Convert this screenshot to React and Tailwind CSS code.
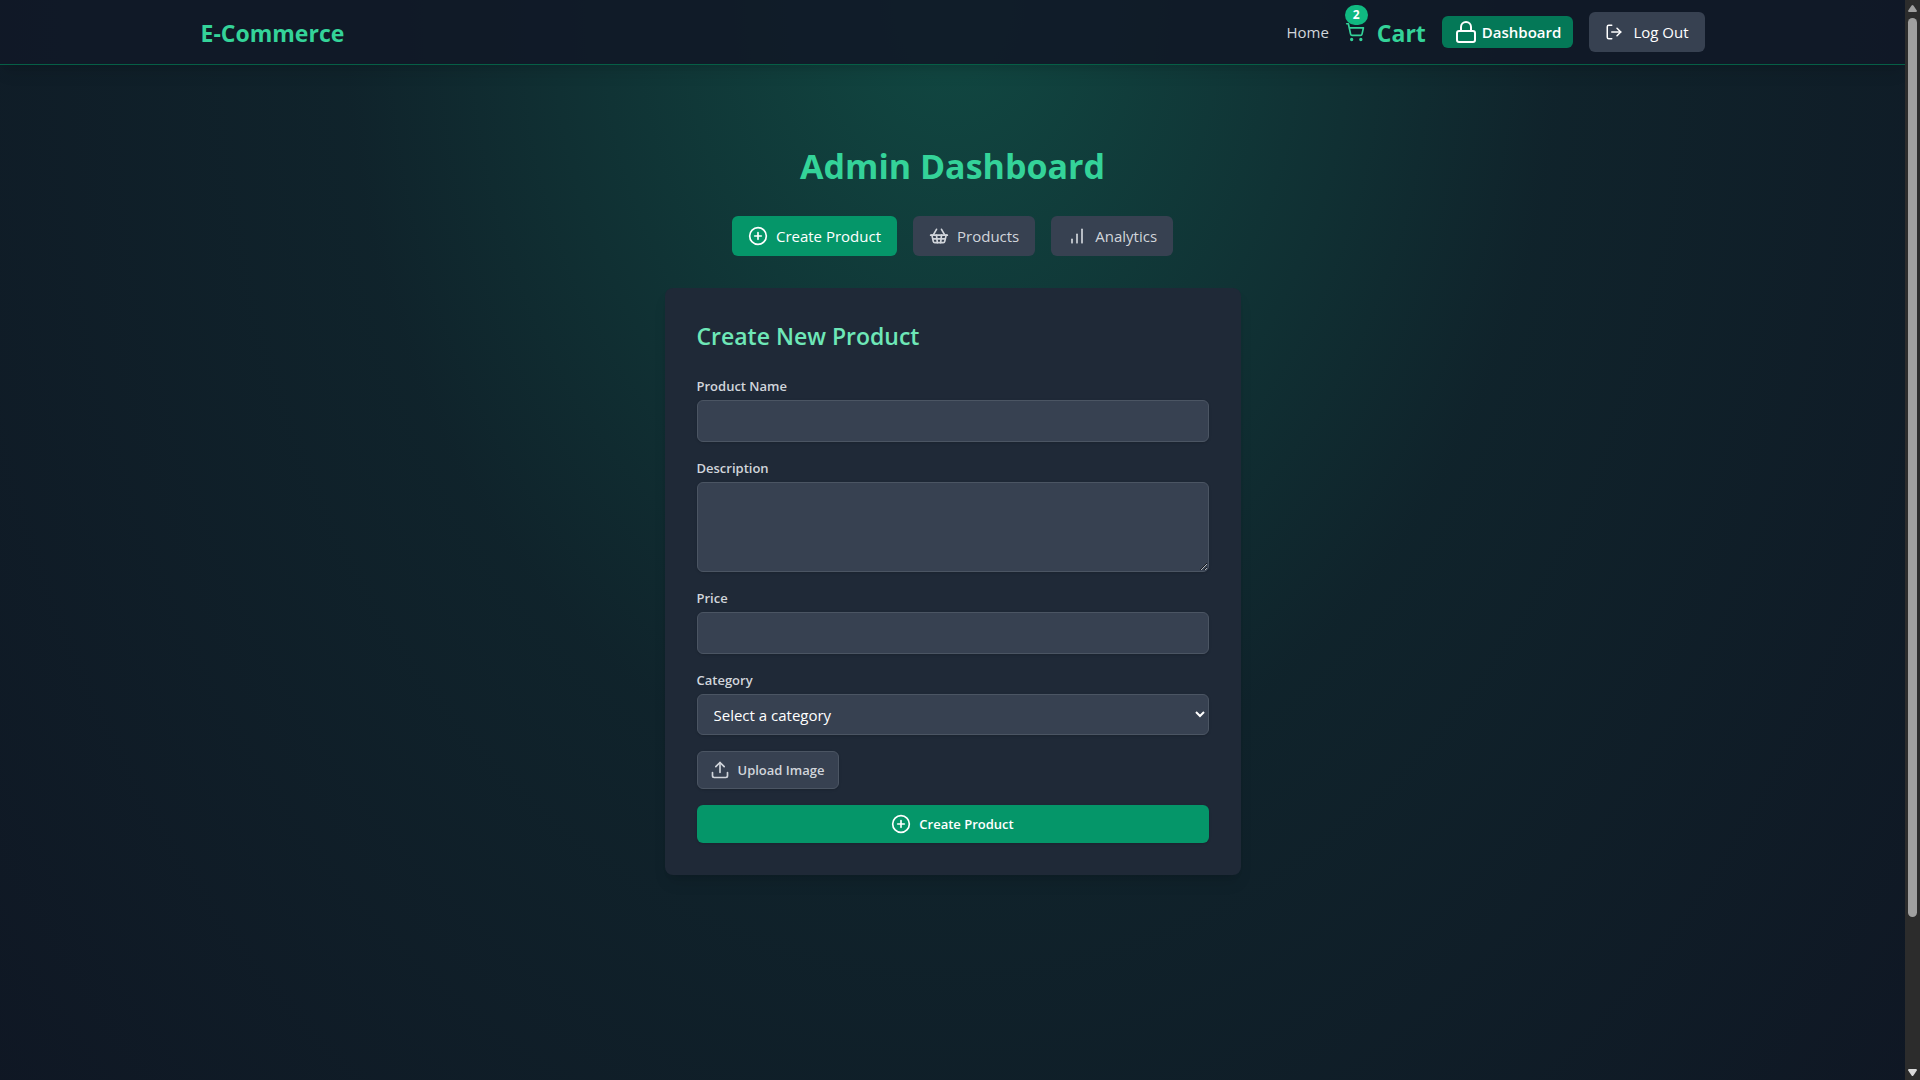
import { PlusCircle, ShoppingBasket, ShoppingCart, Lock, LogOut, Upload } from "lucide-react";

const FIELD =
  "mt-1 block w-full rounded-md border border-[#4b5563] bg-[#374151] px-3 py-2 text-white shadow-sm focus:outline-none focus:ring-2 focus:ring-[#10b981]";
const LABEL = "block text-[13px] leading-5 font-semibold text-[#d1d5db]";

function BarsIcon({ className }) {
  return (
    <svg
      viewBox="0 0 24 24"
      fill="none"
      stroke="currentColor"
      strokeWidth="2"
      strokeLinecap="round"
      strokeLinejoin="round"
      className={className}
      aria-hidden="true"
    >
      <line x1="12" x2="12" y1="20" y2="10" />
      <line x1="18" x2="18" y1="20" y2="4" />
      <line x1="6" x2="6" y1="20" y2="16" />
    </svg>
  );
}

function Header() {
  return (
    <header className="border-b border-[#065f46] bg-[#111827]/90 shadow-lg">
      <div className="mx-auto flex w-full max-w-[1536px] items-center justify-between px-4 py-3">
        <a href="#" className="pt-0.5 text-[23px] leading-7 font-bold text-[#34d399]">
          E-Commerce
        </a>
        <nav className="flex items-center gap-4">
          <a href="#home" className="text-[15px] leading-6 text-[#d1d5db]">
            Home
          </a>
          <a href="#cart" className="relative flex items-center gap-3 text-[#34d399]">
            <ShoppingCart className="h-5 w-5" />
            <span className="pt-0.5 text-[23px] leading-7 font-bold">Cart</span>
            <span className="absolute -top-3 left-0 rounded-full bg-[#10b981] px-2 py-0.5 text-xs leading-4 font-bold text-white">
              2
            </span>
          </a>
          <a
            href="#dashboard"
            className="flex items-center rounded-md bg-[#047857] px-3 py-1 text-[15px] leading-6 font-semibold text-white"
          >
            <Lock className="mr-1 h-6 w-6" />
            Dashboard
          </a>
          <button
            type="button"
            className="flex items-center gap-2.5 rounded-md bg-[#374151] px-4 py-2 text-[15px] leading-6 text-white"
          >
            <LogOut className="h-[18px] w-[18px]" />
            Log Out
          </button>
        </nav>
      </div>
    </header>
  );
}

function Tab({ icon: Icon, label, active }) {
  return (
    <button
      type="button"
      className={
        "flex items-center rounded-md px-4 py-2 text-[15px] leading-6 " +
        (active ? "bg-[#059669] text-white" : "bg-[#374151] text-[#d1d5db]")
      }
    >
      <Icon className="mr-2 h-5 w-5" />
      {label}
    </button>
  );
}

function ProductForm() {
  return (
    <section className="mx-auto w-full max-w-xl rounded-lg bg-[#1f2937] p-8 shadow-lg">
      <h2 className="mb-6 text-[23px] leading-8 font-semibold text-[#6ee7b7]">Create New Product</h2>
      <form className="space-y-4" onSubmit={(e) => e.preventDefault()}>
        <div>
          <label htmlFor="name" className={LABEL}>
            Product Name
          </label>
          <input id="name" type="text" className={FIELD} />
        </div>
        <div>
          <label htmlFor="description" className={LABEL}>
            Description
          </label>
          <textarea id="description" rows="3" className={FIELD} />
        </div>
        <div>
          <label htmlFor="price" className={LABEL}>
            Price
          </label>
          <input id="price" type="number" className={FIELD} />
        </div>
        <div>
          <label htmlFor="category" className={LABEL}>
            Category
          </label>
          <select
            id="category"
            defaultValue=""
            className="mt-1 block h-[41px] w-full rounded-md border border-[#4b5563] bg-[#374151] px-3 text-[15px] text-white shadow-sm"
          >
            <option value="">Select a category</option>
          </select>
        </div>
        <div className="flex">
          <input id="image" type="file" accept="image/*" className="sr-only" />
          <label
            htmlFor="image"
            className="flex cursor-pointer items-center rounded-md border border-[#4b5563] bg-[#374151] py-2 pr-3.5 pl-3 text-[13px] leading-5 font-semibold text-[#d1d5db] shadow-sm"
          >
            <Upload className="mr-2 h-5 w-5" />
            Upload Image
          </label>
        </div>
        <button
          type="submit"
          className="flex w-full items-center justify-center rounded-md border border-transparent bg-[#059669] px-4 py-2 text-[13px] leading-5 font-semibold text-white shadow-sm"
        >
          <PlusCircle className="mr-2 h-5 w-5" />
          Create Product
        </button>
      </form>
    </section>
  );
}

function ScrollRail() {
  return (
    <div className="flex w-[15px] shrink-0 flex-col items-center gap-1.5 bg-[#2c2c2c] pt-[5px] pb-1" aria-hidden="true">
      <svg viewBox="0 0 9 7" className="h-[7px] w-[9px] fill-[#9f9f9f]">
        <path d="M3.6.6Q4.5-.4 5.4.6L8.8 5.4Q9.2 7 8 7H1Q-.2 7 .2 5.4Z" />
      </svg>
      <div className="flex w-[9px] flex-1 flex-col">
        <div className="h-[86%] rounded-full bg-[#9f9f9f]" />
      </div>
      <svg viewBox="0 0 9 7" className="h-[7px] w-[9px] fill-[#d9d9d9]">
        <path d="M3.6 6.4Q4.5 7.4 5.4 6.4L8.8 1.6Q9.2 0 8 0H1Q-.2 0 .2 1.6Z" />
      </svg>
    </div>
  );
}

export default function App() {
  return (
    <div className="flex min-h-screen bg-[#111827] font-['Open_Sans','Noto_Sans',sans-serif] text-white">
      <div className="min-w-0 flex-1 bg-[radial-gradient(ellipse_at_top,rgba(16,185,129,0.3)_0%,rgba(10,80,60,0.2)_45%,rgba(0,0,0,0.1)_100%)] bg-[length:100%_1260px]">
        <Header />
        <main className="px-4 pt-20 pb-16">
          <h1 className="mb-[29px] text-center text-[34px] leading-[42px] font-bold text-[#34d399]">
            Admin Dashboard
          </h1>
          <div className="mb-8 flex justify-center gap-4">
            <Tab icon={PlusCircle} label="Create Product" active />
            <Tab icon={ShoppingBasket} label="Products" />
            <Tab icon={BarsIcon} label="Analytics" />
          </div>
          <ProductForm />
        </main>
      </div>
      <ScrollRail />
    </div>
  );
}
